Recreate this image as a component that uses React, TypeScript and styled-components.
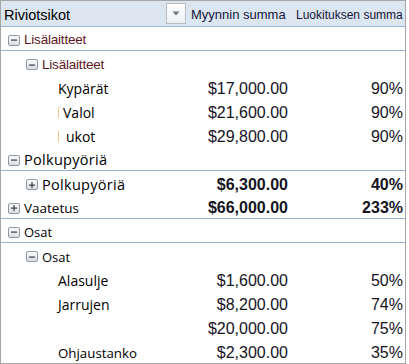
import React from 'react'
import styled, { createGlobalStyle } from 'styled-components'

const GlobalStyle = createGlobalStyle`
  html, body {
    margin: 0;
    padding: 0;
    background: #ffffff;
  }
`

const Pivot = styled.div`
  width: 404px;
  border: 1px solid #a6a6a6;
  background: #ffffff;
  font-family: 'Liberation Sans', Arial, sans-serif;
  color: #111111;
`

const Columns = `
  display: grid;
  grid-template-columns: 1fr 103px 115px;
`

const Header = styled.div`
  ${Columns};
  height: 25px;
  background: #dce6f1;
  border-bottom: 1px solid #95b3d7;
`

const HeadCell = styled.div<{ $size?: number; $pad?: number }>`
  display: flex;
  align-items: flex-end;
  justify-content: space-between;
  padding: 0 0 4px ${(p) => p.$pad ?? 0}px;
  font-size: ${(p) => p.$size ?? 13}px;
  color: #15153a;
  white-space: nowrap;
`

const Title = styled.span`
  font-size: 14.5px;
  color: #000000;
  margin-bottom: -1px;
`

const DropButton = styled.div`
  width: 18px;
  height: 19px;
  margin: 0 1px -2px 0;
  border: 1px solid #b8bcc4;
  background: linear-gradient(#ffffff, #eef0f3);
  display: flex;
  align-items: center;
  justify-content: center;
`

const Row = styled.div<{ $divider?: boolean }>`
  ${Columns};
  box-sizing: border-box;
  height: 24px;
  padding-top: 3px;
  border-bottom: ${(p) => (p.$divider ? '1px solid #95b3d7' : 'none')};
  align-items: center;
`

const Label = styled.div<{ $level: number }>`
  display: flex;
  align-items: center;
  padding-left: ${(p) => [7, 25, 57][p.$level]}px;
  white-space: nowrap;
  position: relative;
`

const Text = styled.span<{ $size?: number; $color?: string; $spacing?: number; $shift?: number; $narrow?: boolean }>`
  font-family: ${(p) => (p.$narrow ? "'Liberation Sans', Arial" : "'Open Sans'")}, sans-serif;
  font-size: ${(p) => p.$size ?? 14}px;
  line-height: 16px;
  color: ${(p) => p.$color ?? '#000000'};
  letter-spacing: ${(p) => p.$spacing ?? 0}px;
  margin-left: ${(p) => p.$shift ?? 0}px;
`

const Toggle = styled.span`
  width: 10px;
  height: 9px;
  margin-right: 4px;
  border: 1px solid #8e97a5;
  border-radius: 2px;
  background: linear-gradient(#fbfbfc, #d9dde3);
  display: flex;
  align-items: center;
  justify-content: center;
`

const Caret = styled.span`
  position: absolute;
  left: 57px;
  top: 2px;
  width: 1px;
  height: 11px;
  background: #f3c98a;
`

const Num = styled.div<{ $bold?: boolean }>`
  text-align: right;
  padding-right: 2px;
  font-size: 16px;
  line-height: 16px;
  font-weight: ${(p) => (p.$bold ? 700 : 400)};
  color: #14141e;
  white-space: nowrap;
`

type Item = {
  level: number
  label: string
  toggle?: 'minus' | 'plus'
  value?: string
  pct?: string
  bold?: boolean
  divider?: boolean
  color?: string
  size?: number
  spacing?: number
  shift?: number
  caret?: boolean
  narrow?: boolean
}

const rows: Item[] = [
  { level: 0, label: 'Lisälaitteet', toggle: 'minus', divider: true, color: '#5e1622', size: 13.5, spacing: -0.2, narrow: true },
  { level: 1, label: 'Lisälaitteet', toggle: 'minus', color: '#5e1622', size: 13.5, spacing: -0.2, narrow: true },
  { level: 2, label: 'Kypärät', value: '$17,000.00', pct: '90%' },
  { level: 2, label: 'Valol', value: '$21,600.00', pct: '90%', caret: true, shift: 5 },
  { level: 2, label: 'ukot', value: '$29,800.00', pct: '90%', caret: true, shift: 8 },
  { level: 0, label: 'Polkupyöriä', toggle: 'minus', divider: true, size: 14.5, spacing: 0.3 },
  { level: 1, label: 'Polkupyöriä', toggle: 'plus', value: '$6,300.00', pct: '40%', bold: true, size: 14.5, spacing: 0.3 },
  { level: 0, label: 'Vaatetus', toggle: 'plus', value: '$66,000.00', pct: '233%', bold: true, divider: true, size: 13.5 },
  { level: 0, label: 'Osat', toggle: 'minus', divider: true, size: 13 },
  { level: 1, label: 'Osat', toggle: 'minus', size: 13 },
  { level: 2, label: 'Alasulje', value: '$1,600.00', pct: '50%' },
  { level: 2, label: 'Jarrujen', value: '$8,200.00', pct: '74%' },
  { level: 2, label: '', value: '$20,000.00', pct: '75%' },
  { level: 2, label: 'Ohjaustanko', value: '$2,300.00', pct: '35%', size: 13.3 },
]

const ToggleIcon = ({ kind }: { kind: 'minus' | 'plus' }) => (
  <Toggle>
    <svg width="8" height="8" viewBox="0 0 8 8">
      <rect x="1" y="3.5" width="6" height="1.2" fill="#3b3f46" />
      {kind === 'plus' && <rect x="3.4" y="1" width="1.2" height="6" fill="#3b3f46" />}
    </svg>
  </Toggle>
)

export default function App() {
  return (
    <>
      <GlobalStyle />
      <Pivot>
        <Header>
          <HeadCell $pad={3}>
            <Title>Riviotsikot</Title>
            <DropButton>
              <svg width="8" height="5" viewBox="0 0 8 5">
                <path d="M0.5 0.5 L7.5 0.5 L4 4.5 Z" fill="#6e737b" />
              </svg>
            </DropButton>
          </HeadCell>
          <HeadCell $pad={4} $size={13}>
            Myynnin summa
          </HeadCell>
          <HeadCell $pad={6} $size={12}>
            Luokituksen summa
          </HeadCell>
        </Header>
        {rows.map((r, i) => (
          <Row key={i} $divider={r.divider}>
            <Label $level={r.level}>
              {r.caret && <Caret />}
              {r.toggle && <ToggleIcon kind={r.toggle} />}
              <Text $size={r.size} $color={r.color} $spacing={r.spacing} $shift={r.shift} $narrow={r.narrow}>
                {r.label}
              </Text>
            </Label>
            <Num $bold={r.bold}>{r.value}</Num>
            <Num $bold={r.bold}>{r.pct}</Num>
          </Row>
        ))}
      </Pivot>
    </>
  )
}
